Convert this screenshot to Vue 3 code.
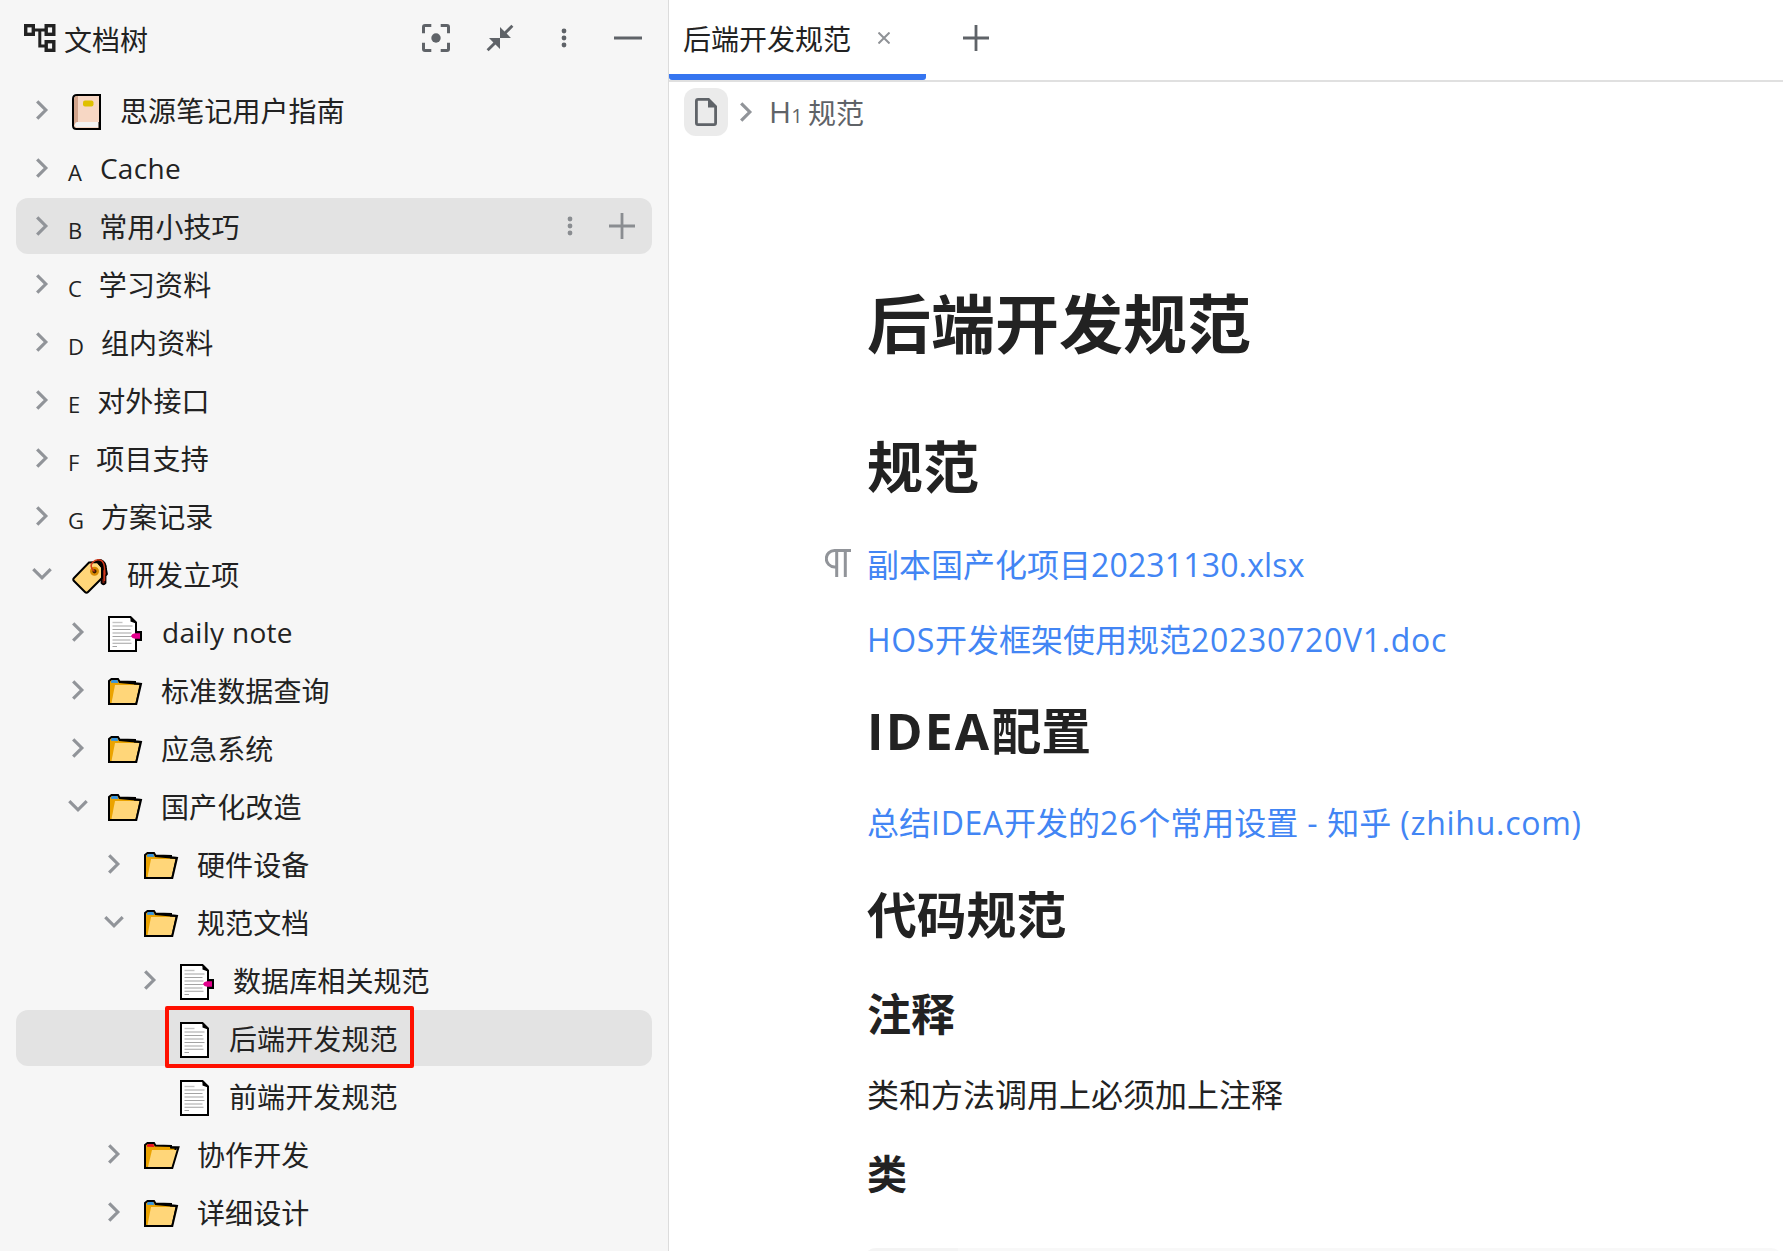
<script setup>
const rows = [
  { level: 0, arrow: 'right', icon: 'book', label: '思源笔记用户指南' },
  { level: 0, arrow: 'right', letter: 'A', label: 'Cache', latin: true },
  { level: 0, arrow: 'right', letter: 'B', label: '常用小技巧', active: true, actions: true },
  { level: 0, arrow: 'right', letter: 'C', label: '学习资料' },
  { level: 0, arrow: 'right', letter: 'D', label: '组内资料' },
  { level: 0, arrow: 'right', letter: 'E', label: '对外接口' },
  { level: 0, arrow: 'right', letter: 'F', label: '项目支持' },
  { level: 0, arrow: 'right', letter: 'G', label: '方案记录' },
  { level: 0, arrow: 'down', icon: 'tag', label: '研发立项' },
  { level: 1, arrow: 'right', icon: 'note', label: 'daily note', latin: true },
  { level: 1, arrow: 'right', icon: 'folder', label: '标准数据查询' },
  { level: 1, arrow: 'right', icon: 'folder', label: '应急系统' },
  { level: 1, arrow: 'down', icon: 'folder', label: '国产化改造' },
  { level: 2, arrow: 'right', icon: 'folder', label: '硬件设备' },
  { level: 2, arrow: 'down', icon: 'folder', label: '规范文档' },
  { level: 3, arrow: 'right', icon: 'note', label: '数据库相关规范' },
  { level: 3, icon: 'page', label: '后端开发规范', active: true, marked: true },
  { level: 3, icon: 'page', label: '前端开发规范' },
  { level: 2, arrow: 'right', icon: 'redfolder', label: '协作开发' },
  { level: 2, arrow: 'right', icon: 'folder', label: '详细设计' },
]

const blocks = [
  { kind: 'title', text: '后端开发规范' },
  { kind: 'h1', text: '规范' },
  { kind: 'p link first', text: '副本国产化项目20231130.xlsx', gutter: true },
  { kind: 'p link second', text: 'HOS开发框架使用规范20230720V1.doc' },
  { kind: 'h2', text: 'IDEA配置' },
  { kind: 'p link third', text: '总结IDEA开发的26个常用设置 - 知乎 (zhihu.com)' },
  { kind: 'h2 next', text: '代码规范' },
  { kind: 'h3', text: '注释' },
  { kind: 'p', text: '类和方法调用上必须加上注释' },
  { kind: 'h4', text: '类' },
]

// Split mixed text so Latin runs can carry their own tracking.
const runs = (text) =>
  text.match(/[\x20-\x7e]+|[^\x20-\x7e]+/g).map((part) => ({ part, latin: part.charCodeAt(0) < 127 }))
</script>

<template>
  <div class="app">
    <aside class="dock">
      <header class="dock-head">
        <svg class="logo" width="32" height="28" viewBox="0 0 32 28" fill="none" stroke="#222" stroke-width="3.4">
          <rect x="1.7" y="1.7" width="7.6" height="8.6" />
          <rect x="22.2" y="1.7" width="7.6" height="8.6" />
          <rect x="22.2" y="17.7" width="7.6" height="8.6" />
          <path d="M10 6h12M15.8 6v16h6" stroke-width="3" />
        </svg>
        <span class="dock-title">文档树</span>
        <svg class="tool focus" width="28" height="28" viewBox="0 0 28 28" fill="none" stroke="#5f6368" stroke-width="3">
          <path d="M1.500 9.300V3q0-1.500 1.500-1.500h6.300M18.700 1.500H25q1.500 0 1.500 1.500v6.300M26.500 18.700V25q0 1.500-1.500 1.500h-6.300M9.300 26.500H3q-1.500 0-1.500-1.500v-6.300" />
          <circle cx="14" cy="14" r="4.700" fill="#5f6368" stroke="none" />
        </svg>
        <svg class="tool collapse" width="28" height="28" viewBox="0 0 28 28" fill="#5f6368">
          <path d="M14 3v11h11l-4.400-4.400L27.400 2.700 25.400.7 18.500 7.500zM14 25V14H3l4.400 4.400L.6 25.300l2 2L9.500 20.500z" />
        </svg>
        <svg class="tool more" width="28" height="28" viewBox="0 0 28 28" fill="#5f6368">
          <circle cx="14" cy="7" r="2.400" /><circle cx="14" cy="14" r="2.400" /><circle cx="14" cy="21" r="2.400" />
        </svg>
        <svg class="tool min" width="28" height="28" viewBox="0 0 28 28" fill="#5f6368">
          <rect y="12.500" width="28" height="3" />
        </svg>
      </header>

      <ul class="tree">
        <li v-for="row in rows" :key="row.label" class="row" :class="['level-' + row.level, { active: row.active }]">
          <span class="toggle">
            <svg v-if="row.arrow" :class="row.arrow" width="20" height="20" viewBox="0 0 20 20" fill="none" stroke="#919499" stroke-width="3.200">
              <path d="M5.200 1.300 13.800 10 5.200 18.700" />
            </svg>
          </span>

          <span v-if="row.letter" class="letter">{{ row.letter }}</span>

          <svg v-else-if="row.icon === 'book'" class="icon book" width="49" height="36" viewBox="0 0 49 36">
            <path d="M5 1h23v34H4.500Q1 35 1 31.500V5Q1 1 5 1z" fill="#f7d7c4" stroke="#000" stroke-width="2" />
            <path d="M2 6q0-4 4-4v27q-2.500 0-4 2z" fill="#d3a58c" />
            <path d="M26.500 28H5q-2 0-2 2.500T5 33h21.500z" fill="#f2f2f2" />
            <path d="M27 28v6h1.500v-6z" stroke="#000" />
            <rect x="11" y="6.500" width="10.500" height="6" rx="2" fill="#dfc000" />
          </svg>

          <svg v-else-if="row.icon === 'tag'" class="icon tag" width="56" height="36" viewBox="0 0 56 36">
            <path d="M24 5Q25 1 29 2q5 2 5 9l1 5-1.500 2v7q-2 2.500-4 0V11z" fill="#7b1d0c" stroke="#000" stroke-width="1.800" />
            <path d="M17 4.500 25.500 4 30 9v11L16 34q-1.500 1.500-3 0L2 23q-1.500-1.500 0-3z" fill="#ffd679" stroke="#000" stroke-width="2" />
            <path d="M24 3.500 29 2.500l4 5-1 5-3-3z" fill="#000" />
            <circle cx="22.500" cy="13.300" r="3.300" fill="#3b1c00" stroke="#d98a00" stroke-width="2.400" />
            <path d="M22.500 13.500Q17 9 20.500 4.500 25 0 30 3q3 3 2.500 11v9" fill="none" stroke="#d23a1c" stroke-width="1.500" />
          </svg>

          <svg v-else-if="row.icon === 'note' || row.icon === 'page'" class="icon" :class="row.icon" height="36" viewBox="0 0 54 36" preserveAspectRatio="xMinYMin slice">
            <path d="M1 1h21.500L28 6.500V35H1z" fill="#fff" stroke="#000" stroke-width="2" />
            <path d="M22.500 1v4.500l5.500 2V6z" fill="#000" />
            <path d="M4.500 6.500h10" stroke="#c4c4c4" stroke-width="1.400" />
            <path d="M4.500 10h20M4.500 13.500h18M4.500 17h19M4.500 20.500h20M4.500 24h18M4.500 27.300h19M4.500 30.500h4.500" stroke="#a3a3a3" stroke-width="1.100" />
            <template v-if="row.icon === 'note'">
              <path d="M28 15h6v10h-6z" fill="#000" />
              <path d="M23 20q1-2.500 4-2.700h5v5.400h-5Q24 22.500 23 20z" fill="#e3008c" />
            </template>
          </svg>

          <svg v-else class="icon folder" width="54" height="28" viewBox="0 0 54 28">
            <path d="M1 26V3L3.500 1h6.500l1.500 2.500 15.500.5v1.500l5 .3-5.300 19.700z" fill="#eba300" stroke="#000" stroke-width="2" />
            <path d="M3 4.800V3.300L4.300 2h5l1 3z" :fill="row.icon === 'redfolder' ? '#e81123' : '#3595e0'" />
            <path v-if="row.icon === 'redfolder'" d="M8 8h25.500L28 25H4z" fill="#ffd679" />
            <path v-else d="M7 7h24.500L27.500 25H3.500z" fill="#ffd679" />
            <path v-if="row.icon === 'redfolder'" d="M27 5.300h7.500L28.300 26H1" fill="none" stroke="#000" stroke-width="2" />
            <path v-else d="M11 4l16 1.500 6 .5-4.700 20H1" fill="none" stroke="#000" stroke-width="2" />
          </svg>

          <span class="label" :class="{ latin: row.latin }">{{ row.label }}</span>

          <span v-if="row.actions" class="actions">
            <svg width="28" height="28" viewBox="0 0 28 28" fill="#8a8d91">
              <circle cx="14" cy="7" r="2.400" /><circle cx="14" cy="14" r="2.400" /><circle cx="14" cy="21" r="2.400" />
            </svg>
            <svg width="26" height="26" viewBox="0 0 26 26" fill="#8a8d91">
              <path d="M11.600 0h2.800v11.600H26v2.800H14.400V26h-2.800V14.400H0v-2.800h11.600z" />
            </svg>
          </span>
          <span v-if="row.marked" class="marker"></span>
        </li>
      </ul>
    </aside>

    <main class="pane">
      <nav class="tabs">
        <div class="tab">
          <span class="tab-name">后端开发规范</span>
          <svg width="12" height="12" viewBox="0 0 12 12" stroke="#8f9296" stroke-width="2">
            <path d="M.5.5l11 11M11.500.5l-11 11" />
          </svg>
        </div>
        <svg class="add" width="26" height="26" viewBox="0 0 26 26" fill="#5f6368">
          <path d="M11.600 0h2.800v11.600H26v2.800H14.400V26h-2.800V14.400H0v-2.800h11.600z" />
        </svg>
      </nav>

      <div class="crumbs">
        <span class="crumb-doc">
          <svg width="22" height="28" viewBox="0 0 22 28" fill="none" stroke="#5f6368" stroke-width="2.800">
            <path d="M3 1.400h10.500L20.600 8.500V25q0 1.600-1.600 1.600H3q-1.600 0-1.600-1.600V3q0-1.600 1.600-1.600z" />
            <path d="M13 1v8.500h8.500z" fill="#5f6368" stroke="none" />
          </svg>
        </span>
        <svg class="sep" width="20" height="20" viewBox="0 0 20 20" fill="none" stroke="#919499" stroke-width="3.200">
          <path d="M5.200 1.300 13.800 10 5.200 18.700" />
        </svg>
        <span class="h-mark">H<small>1</small></span>
        <span class="crumb-name">规范</span>
      </div>

      <article class="doc">
        <div v-for="block in blocks" :key="block.text" class="block" :class="block.kind">
          <svg v-if="block.gutter" class="pilcrow" width="26" height="28" viewBox="0 0 26 28" fill="none" stroke="#919499" stroke-width="3">
            <path d="M26 1.500H9.500a8.200 8.200 0 0 0 0 16.400H12M11.700 1.500V28M20.300 1.500V28" />
          </svg>
          <span v-for="run in runs(block.text)" :key="run.part" :class="{ run: run.latin }">{{ run.part }}</span>
        </div>
        <div class="code"><span class="code-lang"></span></div>
      </article>
    </main>
  </div>
</template>

<style>
body {
  margin: 0;
  overflow: hidden;
}
</style>

<style scoped>
.app {
  display: flex;
  width: 1783px;
  height: 1251px;
  overflow: hidden;
  background: #fff;
  color: #222;
  font-family: "Open Sans", "Noto Sans CJK SC", sans-serif;
  font-size: 28px;
  white-space: nowrap;
}
svg {
  display: block;
  flex: none;
}
.dock {
  box-sizing: border-box;
  flex: none;
  width: 669px;
  background: #f6f6f6;
  border-right: 1px solid #dcdcdc;
}
.dock-head {
  display: flex;
  align-items: center;
  height: 76px;
  padding: 0 26px 0 24px;
}
.dock-title {
  flex: 1;
  margin-left: 8px;
  line-height: 40px;
  padding-top: 4px;
}
.tool + .tool {
  margin-left: 36px;
}
.tree {
  display: flex;
  flex-direction: column;
  gap: 2px;
  margin: 6px 16px 0;
  padding: 0;
  list-style: none;
}
.row {
  position: relative;
  display: flex;
  align-items: center;
  box-sizing: border-box;
  height: 56px;
  padding-left: 16px;
  border-radius: 12px;
}
.level-1 { padding-left: 52px; }
.level-2 { padding-left: 88px; }
.level-3 { padding-left: 124px; }
.active {
  background: #e3e3e3;
}
.toggle {
  flex: none;
  width: 20px;
  height: 20px;
  margin-right: 20px;
}
.down {
  transform: rotate(90deg);
}
.letter {
  margin: 7px 17px 0 -4px;
  font-size: 22px;
  line-height: 28px;
}
.note {
  width: 54px;
}
.page {
  width: 50px;
}
.icon {
  margin: 3px -1px 0 0;
}
.label {
  line-height: 40px;
  padding-top: 2px;
  letter-spacing: 0.1px;
}
.label.latin {
  padding: 0 0 1px 1px;
  letter-spacing: 0.3px;
}
.actions {
  display: flex;
  align-items: center;
  gap: 25px;
  margin: 0 17px 0 auto;
}
.marker {
  position: absolute;
  left: 149px;
  top: -4px;
  box-sizing: border-box;
  width: 249px;
  height: 62px;
  border: 4px solid #ff1000;
  border-radius: 2px;
}
.pane {
  flex: 1;
  min-width: 0;
}
.tabs {
  display: flex;
  box-sizing: border-box;
  height: 82px;
  border-bottom: 2px solid #e0e0e0;
}
.tab {
  display: flex;
  align-items: center;
  box-sizing: border-box;
  width: 257px;
  height: 80px;
  padding: 2px 0 0 14px;
  border-bottom: 6px solid transparent;
  background: linear-gradient(#3575f0, #3575f0) border-box bottom / 100% 6px no-repeat;
  border-radius: 0 0 3px 3px;
}
.tab-name {
  flex: none;
  width: 195px;
  line-height: 40px;
  padding-top: 2px;
}
.add {
  margin: 25px 0 0 37px;
}
.crumbs {
  display: flex;
  align-items: center;
  height: 60px;
  padding-left: 15px;
  color: #5f6368;
}
.crumb-doc {
  display: flex;
  align-items: center;
  justify-content: center;
  width: 44px;
  height: 48px;
  border-radius: 12px;
  background: #ebebeb;
}
.sep {
  margin-left: 8px;
}
.h-mark {
  width: 39px;
  margin-left: 13px;
  font-size: 30px;
  line-height: 40px;
  padding-top: 3px;
}
.h-mark small {
  font-size: 20px;
}
.crumb-name {
  line-height: 40px;
  padding-top: 2px;
}
.doc {
  display: flex;
  flex-direction: column;
  padding: 137px 0 0 198px;
}
.block {
  position: relative;
  font-weight: 700;
  white-space: pre;
}
.title { font-size: 64px; line-height: 90px; }
.h1 { margin-top: 57px; font-size: 56px; line-height: 80px; }
.h2 { margin-top: 30px; font-size: 49.8px; line-height: 70px; }
.h2 .run { letter-spacing: 2.2px; }
.next { margin-top: 31px; }
.h3 { margin-top: 33px; font-size: 44px; line-height: 62px; }
.h4 { margin-top: 25px; font-size: 40px; line-height: 56px; }
.p { margin-top: 24px; font-size: 32px; line-height: 52px; font-weight: 400; }
.first { margin-top: 33px; }
.first .run { letter-spacing: 0.15px; }
.second { margin-top: 23px; }
.second .run { letter-spacing: 0.68px; }
.third { margin-top: 31px; }
.third .run { letter-spacing: 0.72px; }
.link {
  color: #4285f4;
}
.pilcrow {
  position: absolute;
  left: -42px;
  top: 10px;
}
.code {
  height: 60px;
  margin: 46px 0 0 -3px;
  border-radius: 12px;
  overflow: hidden;
  background: #f8f8f8;
}
.code-lang {
  display: block;
  width: 94px;
  height: 60px;
  background: #f4f4f4;
}
</style>
